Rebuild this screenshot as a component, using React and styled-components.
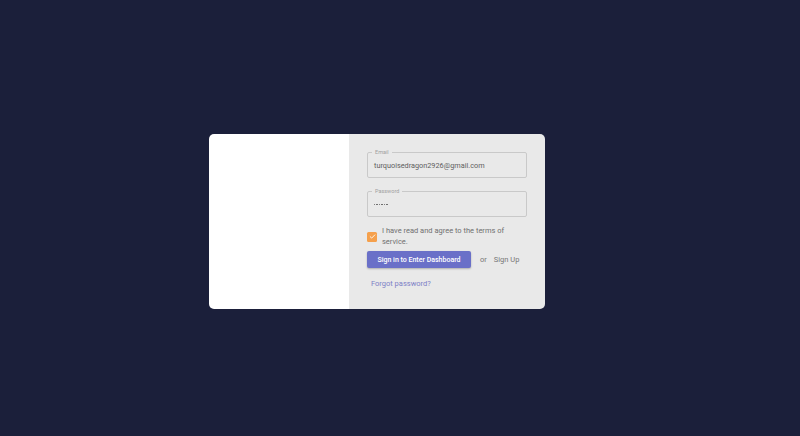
import styled, { createGlobalStyle } from "styled-components";

const GlobalStyle = createGlobalStyle`
  html, body {
    margin: 0;
    padding: 0;
    background: #1b1f3a;
    font-family: Roboto, "Liberation Sans", sans-serif;
  }
`;

export default function App() {
  return (
    <>
      <GlobalStyle />
      <Page>
        <Card>
          <Side />
          <FormPanel>
            <Field>
              <Legend>Email</Legend>
              <Value>turquoisedragon2926@gmail.com</Value>
            </Field>
            <Field last>
              <Legend>Password</Legend>
              <Dots>
                {Array.from({ length: 6 }).map((_, i) => (
                  <Dot key={i} />
                ))}
              </Dots>
            </Field>
            <AgreeRow>
              <CheckBox>
                <svg width="7" height="7" viewBox="0 0 24 24">
                  <path
                    d="M4 12.5l5 5L20 6.5"
                    fill="none"
                    stroke="#fff"
                    strokeWidth="3"
                    strokeLinecap="round"
                    strokeLinejoin="round"
                  />
                </svg>
              </CheckBox>
              <AgreeText>I have read and agree to the terms of service.</AgreeText>
            </AgreeRow>
            <Actions>
              <SignInBtn>Sign in to Enter Dashboard</SignInBtn>
              <Or>or</Or>
              <TextBtn>Sign Up</TextBtn>
            </Actions>
            <Forgot>Forgot password?</Forgot>
          </FormPanel>
        </Card>
      </Page>
    </>
  );
}

const Page = styled.div`
  width: 800px;
  height: 436px;
  box-sizing: border-box;
  padding: 134px 0 0 209px;
`;

const Card = styled.div`
  display: flex;
  width: 336px;
  height: 175px;
  border-radius: 5px;
  overflow: hidden;
`;

const Side = styled.div`
  width: 140px;
  background: #ffffff;
`;

const FormPanel = styled.div`
  flex: 1;
  background: #e9e9e9;
  padding: 18px 18px 0 18px;
  display: flex;
  flex-direction: column;
`;

const Field = styled.div`
  position: relative;
  height: 26px;
  border: 1px solid #c9c9c9;
  border-radius: 2px;
  box-sizing: border-box;
  display: flex;
  align-items: center;
  padding-left: 6px;
  margin-bottom: ${(p) => (p.last ? "9px" : "13px")};
`;

const Legend = styled.span`
  position: absolute;
  left: 4px;
  top: -4px;
  padding: 0 3px;
  background: #e9e9e9;
  font-size: 5.5px;
  line-height: 7px;
  color: #a0a0a0;
`;

const Value = styled.span`
  font-size: 7.3px;
  color: #5e5e5e;
`;

const Dots = styled.span`
  display: flex;
  gap: 1.2px;
  margin-top: 1px;
`;

const Dot = styled.span`
  width: 1.3px;
  height: 1.3px;
  border-radius: 50%;
  background: #5e5e5e;
`;

const AgreeRow = styled.div`
  display: flex;
  align-items: center;
  gap: 5px;
`;

const CheckBox = styled.div`
  width: 10px;
  height: 10px;
  border-radius: 1.5px;
  background: #f5a04c;
  flex: none;
  display: flex;
  align-items: center;
  justify-content: center;
`;

const AgreeText = styled.span`
  font-size: 7.5px;
  line-height: 10.5px;
  color: #707070;
  width: 130px;
`;

const Actions = styled.div`
  display: flex;
  align-items: center;
  margin-top: 4px;
`;

const SignInBtn = styled.button`
  height: 17px;
  width: 104px;
  border: none;
  border-radius: 2px;
  background: #6a70c8;
  color: #ffffff;
  font-family: Roboto, "Liberation Sans", sans-serif;
  font-size: 7px;
  font-weight: 500;
  padding: 0;
  box-shadow: 0 1px 2px rgba(0, 0, 0, 0.25);
  cursor: pointer;
`;

const Or = styled.span`
  font-size: 7.5px;
  color: #777;
  margin-left: 9px;
`;

const TextBtn = styled.span`
  font-size: 7.5px;
  color: #777;
  margin-left: 7px;
`;

const Forgot = styled.span`
  font-size: 7.5px;
  color: #7c80c6;
  margin-top: 11px;
  margin-left: 4px;
`;
